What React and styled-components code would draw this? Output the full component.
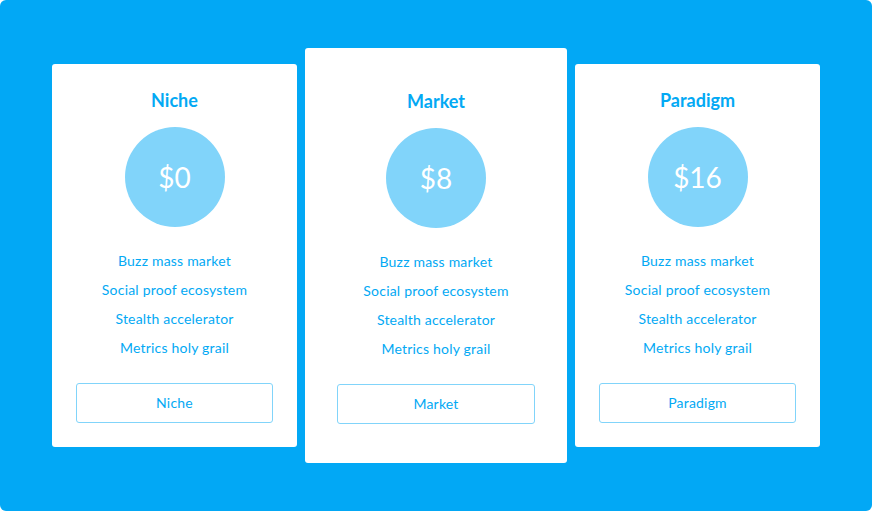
import styled, { createGlobalStyle } from "styled-components";

const GlobalStyle = createGlobalStyle`
  html, body {
    margin: 0;
    padding: 0;
    background: #ffffff;
  }
  body {
    font-family: "Lato", "Open Sans", sans-serif;
  }
`

const Stage = styled.div`
  width: 872px;
  height: 511px;
  background-color: #02a8f5;
  border-radius: 6px;
  display: flex;
  align-items: center;
  justify-content: center;
  gap: 8px;
`

const Card = styled.div`
  box-sizing: border-box;
  width: ${props => (props.featured ? "262px" : "245px")};
  padding: ${props => (props.featured ? "41px 32px 39px" : "24px 24px")};
  background: #ffffff;
  border-radius: 3px;
  display: flex;
  flex-direction: column;
  align-items: center;
`

const Title = styled.h2`
  margin: 0;
  font-size: 18px;
  line-height: 24px;
  font-weight: 700;
  color: #03a9f4;
`

const Price = styled.div`
  margin-top: 15px;
  width: 100px;
  height: 100px;
  border-radius: 50%;
  background: #81d4fa;
  color: #ffffff;
  font-size: 28px;
  font-weight: 400;
  display: flex;
  align-items: center;
  justify-content: center;
`

const Features = styled.ul`
  list-style: none;
  margin: 19px 0 0;
  padding: 0;
  text-align: center;
`

const Feature = styled.li`
  font-size: 14px;
  line-height: 29px;
  letter-spacing: 0.2px;
  color: #03a9f4;
`

const Button = styled.button`
  margin-top: 21px;
  width: 100%;
  height: 40px;
  padding: 0 0 2px;
  background: #ffffff;
  border: 1px solid #81d4fa;
  border-radius: 3px;
  color: #03a9f4;
  font-family: inherit;
  font-size: 14px;
  letter-spacing: 0.2px;
  cursor: pointer;
`

const plans = [
  { name: "Niche", price: "$0" },
  { name: "Market", price: "$8", featured: true },
  { name: "Paradigm", price: "$16" },
];

const features = [
  "Buzz mass market",
  "Social proof ecosystem",
  "Stealth accelerator",
  "Metrics holy grail",
];

export default function App() {
  return (
    <>
      <GlobalStyle />
      <Stage>
        {plans.map(plan => (
          <Card key={plan.name} featured={plan.featured}>
            <Title>{plan.name}</Title>
            <Price>{plan.price}</Price>
            <Features>
              {features.map(f => (
                <Feature key={f}>{f}</Feature>
              ))}
            </Features>
            <Button>{plan.name}</Button>
          </Card>
        ))}
      </Stage>
    </>
  );
}
